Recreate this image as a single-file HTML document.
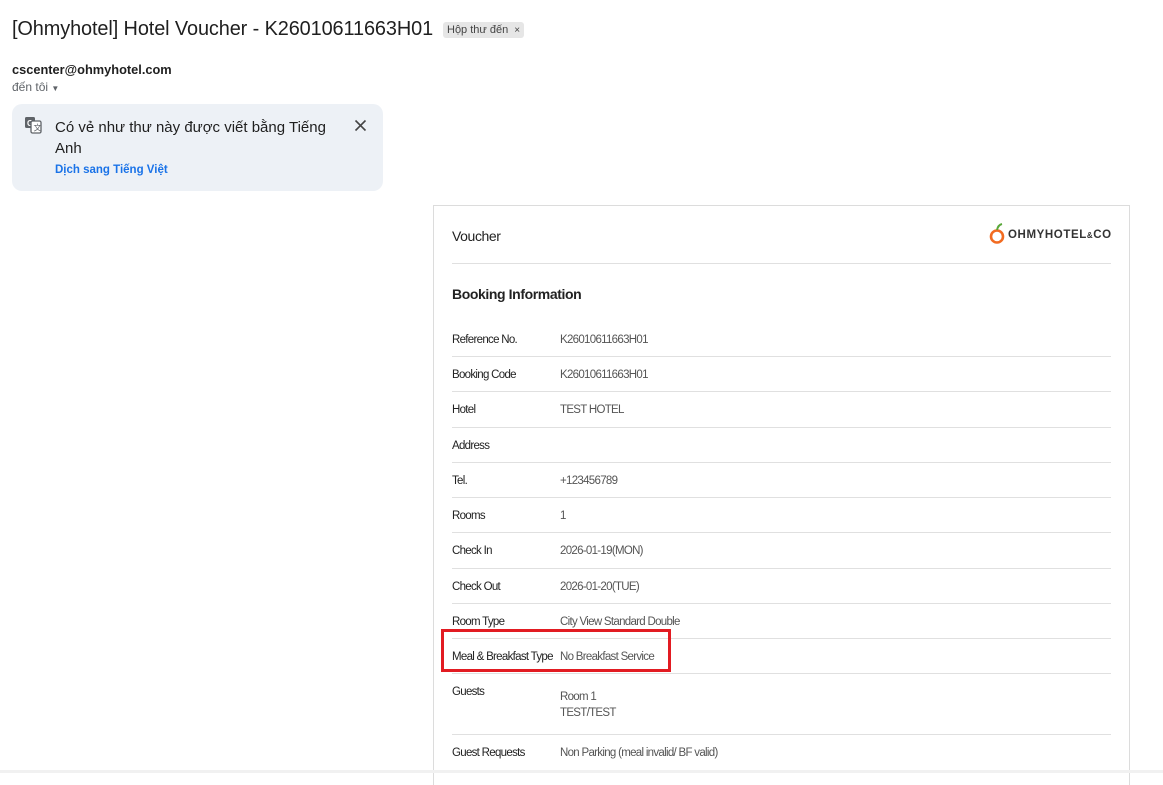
<!DOCTYPE html>
<html><head><meta charset="utf-8"><style>
*{margin:0;padding:0;box-sizing:border-box}
body{width:1163px;height:773px;overflow:hidden;background:#fff;font-family:"Liberation Sans",sans-serif;position:relative;color:#1f1f1f}
.a{position:absolute;white-space:nowrap}
.card{position:absolute;left:433px;top:205px;width:697px;height:580px;border:1px solid #dcdcdc;border-bottom:none}
.hl{position:absolute;left:452px;width:659px;height:1px;background:#e0e0e0}
.k,.v{position:absolute;font-size:11.5px;letter-spacing:-0.7px;line-height:14px;white-space:nowrap}
.k{left:452px;color:#222}
.v{left:560px;color:#555}
</style></head><body>
<div class="a" style="left:12px;top:18px;font-size:19.9px;letter-spacing:-0.1px;color:#1f1f1f">[Ohmyhotel] Hotel Voucher - K26010611663H01</div>
<div class="a" style="left:443px;top:22px;height:16px;padding:0 4px;background:#e6e6e6;border-radius:3px;font-size:11px;line-height:16px;color:#444">Hộp thư đến &nbsp;<span style="font-size:10px">×</span></div>
<div class="a" style="left:12px;top:62px;font-size:12.8px;font-weight:bold;color:#1f1f1f">cscenter@ohmyhotel.com</div>
<div class="a" style="left:12px;top:80px;font-size:12px;color:#5f6368">đến tôi <span style="font-size:8px">▼</span></div>
<div class="a" style="left:12px;top:104px;width:371px;height:87px;background:#edf1f6;border-radius:10px"></div>
<svg class="a" style="left:24px;top:116px" width="18" height="18" viewBox="0 0 18 18"><rect x="1" y="1" width="10" height="11" rx="1.5" fill="#5f6368"/><text x="3" y="10" font-size="8" font-weight="bold" fill="#fff" font-family="Liberation Sans">G</text><rect x="7" y="5" width="10" height="12" rx="1.5" fill="#fff" stroke="#5f6368" stroke-width="1.3"/><text x="9.5" y="14.5" font-size="8" fill="#5f6368" font-family="Liberation Sans">文</text></svg>
<div class="a" style="left:55px;top:117px;font-size:15px;line-height:21px;color:#1f1f1f">Có vẻ như thư này được viết bằng Tiếng<br>Anh</div>
<svg class="a" style="left:354px;top:119px" width="13" height="13" viewBox="0 0 13 13"><path d="M1.5 1.5L11.5 11.5M11.5 1.5L1.5 11.5" stroke="#444" stroke-width="1.6"/></svg>
<div class="a" style="left:55px;top:164px;font-size:11.5px;font-weight:bold;color:#1a73e8">Dịch sang Tiếng Việt</div>

<div class="card"></div>
<div class="a" style="left:452px;top:228px;font-size:14px;letter-spacing:-0.4px;color:#222">Voucher</div>
<svg class="a" style="left:989px;top:222px" width="18" height="24" viewBox="0 0 18 24"><circle cx="8" cy="14.5" r="6" fill="none" stroke="#f26b21" stroke-width="2.6"/><path d="M8 8 Q9 3 13 2" stroke="#5aa83a" stroke-width="2" fill="none"/></svg>
<div class="a" style="left:1008px;top:229px;font-size:11.5px;font-weight:bold;color:#333;letter-spacing:0.6px">OHMYHOTEL<span style="font-size:8px">&amp;</span>CO</div>
<div class="hl" style="top:263px"></div>
<div class="a" style="left:452px;top:286px;font-size:14px;font-weight:bold;letter-spacing:-0.4px;color:#222">Booking Information</div>

<div class="k" style="top:333px">Reference No.</div><div class="v" style="top:333px">K26010611663H01</div>
<div class="hl" style="top:356px"></div>
<div class="k" style="top:368px">Booking Code</div><div class="v" style="top:368px">K26010611663H01</div>
<div class="hl" style="top:391px"></div>
<div class="k" style="top:403px">Hotel</div><div class="v" style="top:403px">TEST HOTEL</div>
<div class="hl" style="top:427px"></div>
<div class="k" style="top:439px">Address</div>
<div class="hl" style="top:462px"></div>
<div class="k" style="top:474px">Tel.</div><div class="v" style="top:474px">+123456789</div>
<div class="hl" style="top:497px"></div>
<div class="k" style="top:509px">Rooms</div><div class="v" style="top:509px">1</div>
<div class="hl" style="top:532px"></div>
<div class="k" style="top:544px">Check In</div><div class="v" style="top:544px">2026-01-19(MON)</div>
<div class="hl" style="top:568px"></div>
<div class="k" style="top:580px">Check Out</div><div class="v" style="top:580px">2026-01-20(TUE)</div>
<div class="hl" style="top:603px"></div>
<div class="k" style="top:615px">Room Type</div><div class="v" style="top:615px">City View Standard Double</div>
<div class="hl" style="top:638px"></div>
<div class="k" style="top:650px">Meal &amp; Breakfast Type</div><div class="v" style="top:650px">No Breakfast Service</div>
<div class="hl" style="top:673px"></div>
<div class="k" style="top:685px">Guests</div><div class="v" style="top:690px">Room 1</div><div class="v" style="top:706px">TEST/TEST</div>
<div class="hl" style="top:734px"></div>
<div class="k" style="top:746px">Guest Requests</div><div class="v" style="top:746px">Non Parking (meal invalid/ BF valid)</div>
<div class="a" style="left:441px;top:629px;width:230px;height:43px;border:3px solid #e21b22"></div>
<div class="a" style="left:0;top:770px;width:1163px;height:3px;background:#f1f1f1"></div>
</body></html>
